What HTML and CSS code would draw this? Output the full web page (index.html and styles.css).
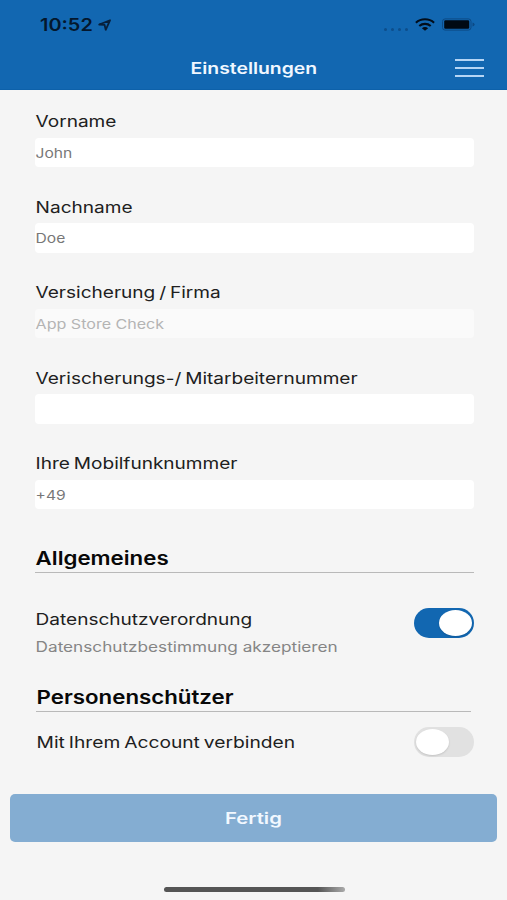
FILE: index.html
```html
<!DOCTYPE html>
<html lang="de">
<head>
<meta charset="utf-8">
<title>Einstellungen</title>
<link rel="stylesheet" href="styles.css">
</head>
<body>
<header class="top">
  <div class="status">
    <div class="clock"><span class="wide time">10:52</span></div>
    <svg class="arrow" width="14" height="12" viewBox="0 0 14 12"><path d="M1.2 5.5 12 1.3 7.7 10.8 6.6 5.9Z" fill="none" stroke="#071f3b" stroke-width="1.8" stroke-linejoin="round"/></svg>
    <div class="dots"><i></i><i></i><i></i><i></i></div>
    <svg class="wifi" width="20" height="13" viewBox="0 0 20 13"><g fill="none" stroke="#020d1a" stroke-width="2.1"><path d="M.9 4.7C5.9.1 14.1.1 19.1 4.7"/><path d="M4.3 8C7.5 5.2 12.5 5.2 15.7 8"/></g><path d="M6.9 10.2C8.5 8.7 11.5 8.7 13.1 10.2L10 12.8Z" fill="#020d1a"/></svg>
    <svg class="battery" width="33" height="13" viewBox="0 0 33 13"><rect x=".5" y=".9" width="28.5" height="11.2" rx="2.6" fill="none" stroke="#0c4a85"/><rect x="2.2" y="2.2" width="25" height="8.6" rx="1.3" fill="#000a14"/><path d="M30.5 4.5Q32.6 5 32.6 6.5T30.5 8.5Z" fill="#0c4a85"/></svg>
  </div>
  <div class="nav">
    <h1 class="wide title">Einstellungen</h1>
    <div class="menu"><i></i><i></i><i></i></div>
  </div>
</header>
<main class="form">
  <section class="field"><div class="label"><span class="wide">Vorname</span></div><div class="input"><span class="wide">John</span></div></section>
  <section class="field"><div class="label"><span class="wide">Nachname</span></div><div class="input"><span class="wide">Doe</span></div></section>
  <section class="field"><div class="label"><span class="wide">Versicherung / Firma</span></div><div class="input disabled"><span class="wide">App Store Check</span></div></section>
  <section class="field"><div class="label"><span class="wide">Verischerungs-/ Mitarbeiternummer</span></div><div class="input"></div></section>
  <section class="field"><div class="label"><span class="wide">Ihre Mobilfunknummer</span></div><div class="input"><span class="wide">+49</span></div></section>
  <h2 class="heading general"><span class="wide">Allgemeines</span></h2>
  <div class="row privacy">
    <div class="copy"><div class="label"><span class="wide">Datenschutzverordnung</span></div><div class="hint"><span class="wide">Datenschutzbestimmung akzeptieren</span></div></div>
    <div class="toggle on"><i></i></div>
  </div>
  <h2 class="heading guard"><span class="wide">Personenschützer</span></h2>
  <div class="row account">
    <div class="label"><span class="wide">Mit Ihrem Account verbinden</span></div>
    <div class="toggle"><i></i></div>
  </div>
</main>
<div class="submit"><span class="wide">Fertig</span></div>
<div class="home"></div>
</body>
</html>
```
FILE: styles.css
```css
* { box-sizing: border-box; }
body {
  margin: 0;
  height: 900px;
  overflow: hidden;
  background: #f5f5f5;
  color: #202020;
  font-family: Inter, "Liberation Sans", sans-serif;
}
h1, h2 { margin: 0; }
.wide {
  display: inline-block;
  white-space: nowrap;
  transform: scaleX(var(--stretch, 1.2));
  transform-origin: left center;
}
.form .wide { transform: translateX(.6px) scaleX(var(--stretch, 1.2)); }
.top { height: 89.5px; background: #1267b1; border-bottom: 1px solid #0d61aa; }
.status { display: flex; align-items: center; height: 48px; padding: 1px 32px 0 40px; }
.clock { --stretch: 1.17; width: 58px; font-size: 17px; font-weight: 600; color: #04172d; line-height: 20px; }
.dots { display: flex; gap: 4px; margin: 9px 7px 0 auto; }
.dots i { width: 3px; height: 3px; border-radius: 50%; background: #0d4e8b; }
.wifi { margin-right: 7px; }
.nav {
  display: grid;
  grid-template-columns: 1fr auto 1fr;
  align-items: center;
  height: 40px;
  padding: 0 23px;
}
.title { --stretch: 1.21; grid-column: 2; font-size: 16px; font-weight: 600; line-height: 20px; color: #f0f7ff; transform: translateX(.5px) scaleX(var(--stretch)); transform-origin: center; }
.menu { justify-self: end; display: flex; flex-direction: column; gap: 6px; width: 29px; }
.menu i { height: 2px; background: #b5d5f5; }
.form { padding: 21.5px 33px 0 35px; }
.field { height: 85.5px; }
.label { --stretch: 1.19; height: 20px; font-size: 16px; line-height: 20px; word-spacing: -1.2px; }
.input {
  height: 29.5px;
  margin-top: 6.5px;
  background: #fff;
  border-radius: 4px;
  font-size: 13px;
  line-height: 30.5px;
  color: #777;
}
.input.disabled { --stretch: 1.235; background: #fafafa; color: #b4b4b4; }
.heading {
  --stretch: 1.172;
  height: 26px;
  border-bottom: 1px solid #b9b9b9;
  color: #080808;
  font-size: 19px;
  font-weight: 600;
  line-height: 24px;
}
.general { margin-top: 8.5px; }
.row { display: flex; justify-content: space-between; }
.privacy { margin-top: 35px; height: 78px; }
.privacy .label { padding-top: .5px; }
.hint { --stretch: 1.227; margin-top: 9px; font-size: 14px; line-height: 20px; color: #858585; }
.guard { margin: 0 3px 0 1px; }
.account { margin-top: 15px; padding-left: 1px; align-items: center; }
.account .label { --stretch: 1.2; }
.toggle { display: flex; width: 60.5px; height: 30px; padding: 2px; border-radius: 15px; background: #e1e1e1; }
.toggle i { width: 33px; height: 26px; border-radius: 50%; background: #fff; box-shadow: 0 1px 2px #0002; }
.toggle.on { justify-content: flex-end; background: #1267b1; }
.submit {
  display: flex;
  align-items: center;
  justify-content: center;
  height: 48.5px;
  margin: 36.5px 9.7px 0 10.3px;
  border-radius: 5px;
  background: #84add2;
  color: #f2f8ff;
  font-size: 16px;
  font-weight: 600;
}
.submit .wide { --stretch: 1.27; transform-origin: center; }
.home { width: 181px; height: 5px; margin: 45px 0 0 164px; border-radius: 3px; background: linear-gradient(90deg, #555 85%, #aaa); }
```
